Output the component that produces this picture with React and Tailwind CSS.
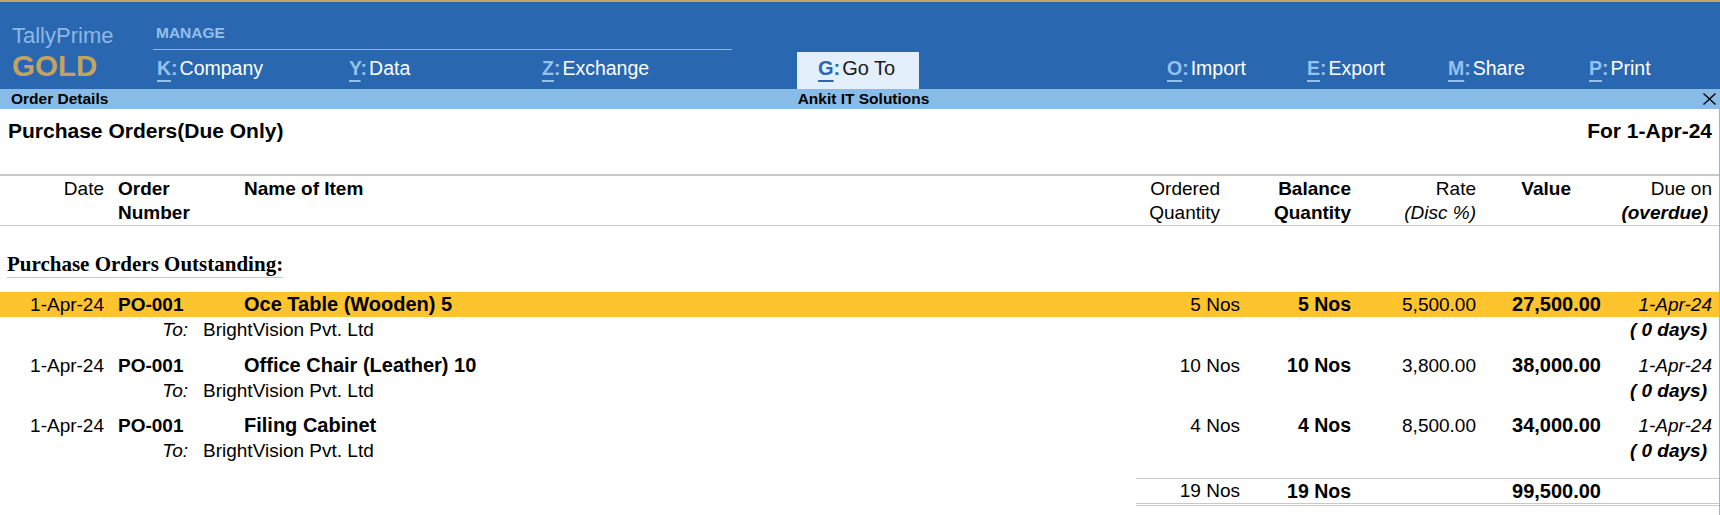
import React from "react";

const orders = [
  { date: "1-Apr-24", no: "PO-001", item: "Oce Table (Wooden) 5", party: "BrightVision Pvt. Ltd", ordered: "5 Nos", balance: "5 Nos", rate: "5,500.00", value: "27,500.00", due: "1-Apr-24", days: "( 0 days)" },
  { date: "1-Apr-24", no: "PO-001", item: "Office Chair (Leather) 10", party: "BrightVision Pvt. Ltd", ordered: "10 Nos", balance: "10 Nos", rate: "3,800.00", value: "38,000.00", due: "1-Apr-24", days: "( 0 days)" },
  { date: "1-Apr-24", no: "PO-001", item: "Filing Cabinet", party: "BrightVision Pvt. Ltd", ordered: "4 Nos", balance: "4 Nos", rate: "8,500.00", value: "34,000.00", due: "1-Apr-24", days: "( 0 days)" },
];

function MenuItem({ hotkey, label, width }) {
  return (
    <div className={width + " pt-[4px] text-[19.5px] leading-[24px] whitespace-nowrap"}>
      <span className="font-bold text-[#94c1ee] underline underline-offset-[5px] decoration-[1.5px]">{hotkey}</span>
      <span className="font-bold text-[#94c1ee]">:</span>
      <span className="ml-[2px] text-white">{label}</span>
    </div>
  );
}

function OrderRow({ order, selected }) {
  return (
    <div>
      <div className={"flex h-[25px] leading-[25px] pr-[7px] " + (selected ? "bg-[#fec42e]" : "")}>
        <div className="w-[104px] text-right">{order.date}</div>
        <div className="ml-[14px] w-[126px] font-bold">{order.no}</div>
        <div className="flex-1 font-bold text-[20px]">{order.item}</div>
        <div className="w-[104px] text-right">{order.ordered}</div>
        <div className="w-[111px] text-right font-bold text-[19.5px]">{order.balance}</div>
        <div className="w-[125px] text-right">{order.rate}</div>
        <div className="w-[125px] text-right font-bold text-[20px]">{order.value}</div>
        <div className="w-[111px] text-right italic">{order.due}</div>
      </div>
      <div className="flex h-[25px] leading-[25px] pr-[7px]">
        <div className="w-[188px] text-right italic">To:</div>
        <div className="ml-[15px] flex-1">{order.party}</div>
        <div className="w-[111px] text-right italic font-bold pr-[5px]">{order.days}</div>
      </div>
    </div>
  );
}

export default function App() {
  return (
    <div className="w-[1720px] h-[515px] overflow-hidden bg-white text-black font-['Liberation_Sans',Arial,sans-serif]">
      <div className="h-[2px] bg-[#c4a660]" />

      {/* Top bar */}
      <header className="h-[87px] bg-[#2a67b1] flex">
        <div className="w-[153px] pl-[12px] pt-[22px]">
          <div className="text-[22px] leading-[24px] text-[#8db7e6]">TallyPrime</div>
          <div className="mt-[2px] text-[29.5px] leading-[32px] font-bold text-[#c4a45c]">GOLD</div>
        </div>
        <div className="flex-1 flex flex-col">
          <div className="w-[579px] border-b border-[#8ab8e6] pt-[22px] pb-[7px] pl-[3px] text-[15.5px] leading-[18px] font-bold text-[#95bfeb]">
            MANAGE
          </div>
          <div className="flex flex-1 pt-[2px] pl-[4px]">
            <MenuItem hotkey="K" label="Company" width="w-[192px]" />
            <MenuItem hotkey="Y" label="Data" width="w-[193px]" />
            <MenuItem hotkey="Z" label="Exchange" width="w-[255px]" />
            <div className="w-[122px] bg-[#e3effa] pl-[21px] pt-[4px] text-[20px] leading-[24px] whitespace-nowrap">
              <span className="font-bold text-[#2a67b1] underline underline-offset-[5px] decoration-[1.5px]">G</span>
              <span className="font-bold text-[#2a67b1]">:</span>
              <span className="ml-[2px] text-[#1a1a1a]">Go To</span>
            </div>
            <div className="w-[248px]" />
            <MenuItem hotkey="O" label="Import" width="w-[140px]" />
            <MenuItem hotkey="E" label="Export" width="w-[141px]" />
            <MenuItem hotkey="M" label="Share" width="w-[141px]" />
            <MenuItem hotkey="P" label="Print" width="flex-1" />
          </div>
        </div>
      </header>

      {/* Title strip */}
      <div className="h-[20px] bg-[#88bce6] flex items-center text-[15.5px] leading-[20px] font-bold">
        <div className="flex-1 pl-[11px]">Order Details</div>
        <div>Ankit IT Solutions</div>
        <div className="flex-1 flex justify-end pr-[4px]">
          <svg width="13" height="12" viewBox="0 0 13 12" fill="none" stroke="#000" strokeWidth="1.4">
            <path d="M0.5 0.5 L12.5 11.5 M12.5 0.5 L0.5 11.5" />
          </svg>
        </div>
      </div>

      {/* Report */}
      <div className="h-[406px] border-r border-[#88bce6] text-[19px]">
        <div className="h-[65px] flex justify-between pt-[9px] pl-[8px] pr-[7px] text-[21px] leading-[26px] font-bold">
          <div>Purchase Orders(Due Only)</div>
          <div>For 1-Apr-24</div>
        </div>

        <div className="flex border-t-2 border-b border-[#c8c8c8] pt-[1px] pr-[7px] leading-[24px]">
          <div className="w-[104px] text-right">Date</div>
          <div className="ml-[14px] w-[126px] font-bold">
            Order
            <br />
            Number
          </div>
          <div className="flex-1 font-bold">Name of Item</div>
          <div className="w-[104px] text-right pr-[20px]">
            Ordered
            <br />
            Quantity
          </div>
          <div className="w-[111px] text-right font-bold">
            Balance
            <br />
            Quantity
          </div>
          <div className="w-[125px] text-right">
            Rate
            <br />
            <span className="italic">(Disc %)</span>
          </div>
          <div className="w-[125px] text-right font-bold pr-[30px]">Value</div>
          <div className="w-[111px] text-right">
            Due on
            <br />
            <span className="italic font-bold pr-[4px]">(overdue)</span>
          </div>
        </div>

        <div className="mt-[25px] ml-[7px] w-fit border-b border-[#c8c8c8] text-[21px] leading-[26px] font-bold font-['Liberation_Serif','Times_New_Roman',serif]">
          Purchase Orders Outstanding:
        </div>

        <div className="mt-[14px] flex flex-col gap-[10.5px]">
          {orders.map((o, i) => (
            <OrderRow key={i} order={o} selected={i === 0} />
          ))}
        </div>

        <div className="mt-[15px] flex justify-end">
          <div className="w-[583px] flex border-t border-b-[3px] border-double border-[#c8c8c8] pr-[7px] leading-[24px]">
            <div className="w-[104px] text-right">19 Nos</div>
            <div className="w-[111px] text-right font-bold text-[19.5px]">19 Nos</div>
            <div className="w-[125px]" />
            <div className="w-[125px] text-right font-bold text-[20px]">99,500.00</div>
            <div className="w-[111px]" />
          </div>
        </div>
      </div>
    </div>
  );
}
